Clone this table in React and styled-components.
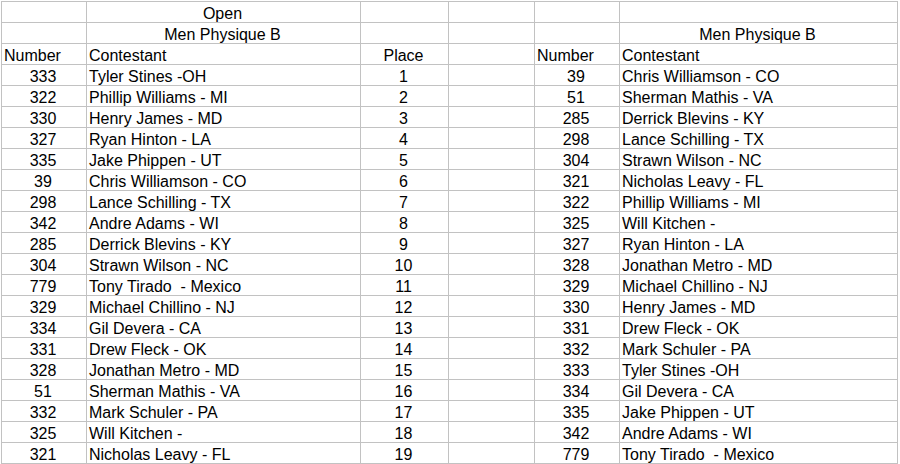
import React from "react";
import styled, { createGlobalStyle } from "styled-components";

const GlobalStyle = createGlobalStyle`
  html, body {
    margin: 0;
    padding: 0;
    background: #ffffff;
  }
  body {
    font-family: "Liberation Sans", Arial, sans-serif;
    color: #000000;
  }
`;

const Sheet = styled.div`
  display: grid;
  grid-template-columns: 85px 274px 88px 86px 85px 278px;
  grid-auto-rows: 21px;
  margin: 1px 0 0 1px;
  width: max-content;
  border-left: 1px solid #c2c2c2;
  border-top: 1px solid #c2c2c2;
`;

const Cell = styled.div`
  box-sizing: border-box;
  height: 21px;
  border-right: 1px solid #c2c2c2;
  border-bottom: 1px solid #c2c2c2;
  padding: 2px 2px 0 ${(p) => (p.$align === "left" ? "2px" : "0")};
  font-size: 16px;
  line-height: 20px;
  text-align: ${(p) => p.$align || "center"};
  white-space: pre;
`;

const left = [
  ["333", "Tyler Stines -OH"],
  ["322", "Phillip Williams - MI"],
  ["330", "Henry James - MD"],
  ["327", "Ryan Hinton - LA"],
  ["335", "Jake Phippen - UT"],
  ["39", "Chris Williamson - CO"],
  ["298", "Lance Schilling - TX"],
  ["342", "Andre Adams - WI"],
  ["285", "Derrick Blevins - KY"],
  ["304", "Strawn Wilson - NC"],
  ["779", "Tony Tirado  - Mexico"],
  ["329", "Michael Chillino - NJ"],
  ["334", "Gil Devera - CA"],
  ["331", "Drew Fleck - OK"],
  ["328", "Jonathan Metro - MD"],
  ["51", "Sherman Mathis - VA"],
  ["332", "Mark Schuler - PA"],
  ["325", "Will Kitchen -"],
  ["321", "Nicholas Leavy - FL"],
];

// same contestants, sorted by number
const sorted = [...left].sort((a, b) => Number(a[0]) - Number(b[0]));

const App = () => (
  <>
    <GlobalStyle />
    <Sheet>
      <Cell />
      <Cell>Open</Cell>
      <Cell />
      <Cell />
      <Cell />
      <Cell />

      <Cell />
      <Cell>Men Physique B</Cell>
      <Cell />
      <Cell />
      <Cell />
      <Cell>Men Physique B</Cell>

      <Cell $align="left">Number</Cell>
      <Cell $align="left">Contestant</Cell>
      <Cell>Place</Cell>
      <Cell />
      <Cell $align="left">Number</Cell>
      <Cell $align="left">Contestant</Cell>

      {left.map(([num, name], i) => (
        <React.Fragment key={num}>
          <Cell>{num}</Cell>
          <Cell $align="left">{name}</Cell>
          <Cell>{i + 1}</Cell>
          <Cell />
          <Cell>{sorted[i][0]}</Cell>
          <Cell $align="left">{sorted[i][1]}</Cell>
        </React.Fragment>
      ))}
    </Sheet>
  </>
);

export default App;
